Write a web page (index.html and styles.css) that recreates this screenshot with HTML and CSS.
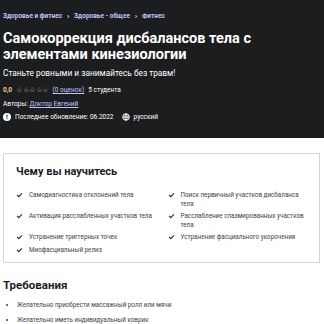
FILE: index.html
```html
<!DOCTYPE html>
<html lang="ru">
<head>
    <meta charset="UTF-8">
    <meta name="viewport" content="width=device-width, initial-scale=1.0">
    <title>Самокоррекция дисбалансов тела</title>
    <link rel="stylesheet" href="styles.css">
</head>
<body>

    <div class="hero">
        <div class="crumbs">
            <a href="#">Здоровье и фитнес</a>
            <span class="sep">&#8250;</span>
            <a href="#">Здоровье - общее</a>
            <span class="sep">&#8250;</span>
            <a href="#">Фитнес</a>
        </div>
        <h1>Самокоррекция дисбалансов тела с элементами кинезиологии</h1>
        <p class="lead">Станьте ровными и занимайтесь без травм!</p>
        <div class="rating">
            <span class="score">0,0</span>
            <span class="stars">&#9734;&#9734;&#9734;&#9734;&#9734;</span>
            <a href="#">(0 оценок)</a>
            <span>5 студента</span>
        </div>
        <div class="authors">Авторы: <a href="#">Доктор Евгений</a></div>
        <div class="meta">
            <span class="meta-item">
                <svg width="8" height="8" viewBox="0 0 16 16"><circle cx="8" cy="8" r="8" fill="#fff"/><rect x="7" y="3" width="2" height="6" fill="#1c1d1f"/><rect x="7" y="10.5" width="2" height="2" fill="#1c1d1f"/></svg>
                Последнее обновление: 06.2022
            </span>
            <span class="meta-item">
                <svg width="8" height="8" viewBox="0 0 16 16" fill="none" stroke="#fff" stroke-width="2"><circle cx="8" cy="8" r="6.5"/><path d="M1.5 8h13M8 1.5c-3 3.5-3 9.5 0 13M8 1.5c3 3.5 3 9.5 0 13"/></svg>
                русский
            </span>
        </div>
    </div>

    <div class="learn">
        <h2>Чему вы научитесь</h2>
        <ul class="learn-list">
            <li>Самодиагностика отклонений тела</li>
            <li>Поиск первичный участков дисбаланса тела</li>
            <li>Активация расслабленных участков тела</li>
            <li>Расслабление спазмированных участков тела</li>
            <li>Устранение триггерных точек</li>
            <li>Устранение фасциального укорочения</li>
            <li>Миофасциальный релиз</li>
        </ul>
    </div>

    <div class="reqs">
        <h2>Требования</h2>
        <ul>
            <li>Желательно приобрести массажный ролл или мячи</li>
            <li>Желательно иметь индивидуальный коврик</li>
        </ul>
    </div>

</body>
</html>
```

FILE: styles.css
```css
body{
    margin: 0;
    background: #fff;
    color: #1c1d1f;
    font-family: Roboto, "Noto Sans", sans-serif;
}

a{
    color: inherit;
}

.hero{
    background: #1c1d1f;
    color: #fff;
    padding: 12px 3px 10px;
    height: 116px;
}

.crumbs{
    font-size: 6.5px;
    font-weight: 700;
    color: #c0c4fc;
    display: flex;
    gap: 5px;
}

.crumbs a{
    text-decoration: none;
}

.crumbs .sep{
    color: #fff;
}

h1{
    font-size: 14.5px;
    line-height: 15.5px;
    font-weight: 700;
    margin: 11px 0 0;
    max-width: 290px;
}

.lead{
    font-size: 8.3px;
    margin: 6px 0 0;
}

.rating{
    font-size: 6.5px;
    margin-top: 8px;
    display: flex;
    gap: 4px;
    align-items: center;
}

.rating .score{
    color: #f3ca8c;
    font-weight: 700;
}

.rating .stars{
    color: #f3ca8c;
    letter-spacing: 0.5px;
}

.rating a{
    color: #c0c4fc;
}

.authors{
    font-size: 6.5px;
    margin-top: 6px;
}

.authors a{
    color: #c0c4fc;
}

.meta{
    font-size: 6.5px;
    margin-top: 5px;
    display: flex;
    gap: 8px;
}

.meta-item{
    display: flex;
    align-items: center;
    gap: 4px;
}

.learn{
    border: 1px solid #d1d7dc;
    margin: 15px 4px 0 3px;
    padding: 11px 12px 10px;
    height: 87px;
}

h2{
    font-size: 11px;
    font-weight: 700;
    margin: 0;
}

.learn-list{
    list-style: none;
    margin: 13px 0 0;
    padding: 0;
    display: grid;
    grid-template-columns: 1fr 1fr;
    column-gap: 12px;
    row-gap: 4px;
    font-size: 6.3px;
    line-height: 8.5px;
    color: #3e4143;
}

.learn-list li{
    position: relative;
    padding-left: 13px;
}

.learn-list li::before{
    content: '';
    position: absolute;
    left: 1px;
    top: 2px;
    width: 4px;
    height: 2px;
    border-left: 1px solid #1c1d1f;
    border-bottom: 1px solid #1c1d1f;
    transform: rotate(-45deg);
}

.reqs{
    padding: 15px 3px 0;
}

.reqs h2{
    font-size: 11.5px;
}

.reqs ul{
    margin: 9px 0 0;
    padding-left: 14px;
    font-size: 6.3px;
    line-height: 8px;
    color: #3e4143;
}

.reqs li{
    margin-bottom: 7px;
}
```
